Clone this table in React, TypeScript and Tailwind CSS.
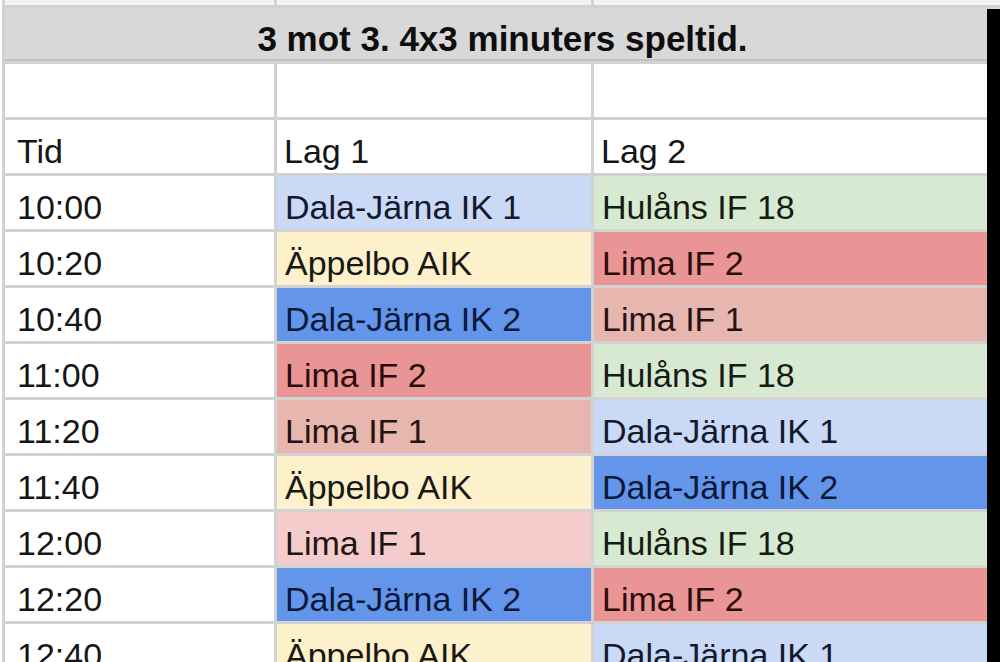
import React from "react";

type Cell = { t: string; bg: string; fg?: string };

const C = {
  lblue: "bg-[#c9d9f6]",
  blue: "bg-[#6396ea]",
  yellow: "bg-[#fdf1cb]",
  red: "bg-[#ea9595]",
  berry: "bg-[#e7b6ae]",
  pink: "bg-[#f4cccc]",
  green: "bg-[#d8e9d2]",
};

const D1: Cell = { t: "Dala-Järna IK 1", bg: C.lblue, fg: "text-[#141a2c]" };
const D2: Cell = { t: "Dala-Järna IK 2", bg: C.blue, fg: "text-[#0c1838]" };
const AP: Cell = { t: "Äppelbo AIK", bg: C.yellow, fg: "text-[#1a1814]" };
const L2: Cell = { t: "Lima IF 2", bg: C.red, fg: "text-[#2a0c0c]" };
const L1b: Cell = { t: "Lima IF 1", bg: C.berry, fg: "text-[#241312]" };
const L1p: Cell = { t: "Lima IF 1", bg: C.pink, fg: "text-[#221414]" };
const HU: Cell = { t: "Hulåns IF 18", bg: C.green, fg: "text-[#141c14]" };

const rows: { time: string; a: Cell; b: Cell }[] = [
  { time: "10:00", a: D1, b: HU },
  { time: "10:20", a: AP, b: L2 },
  { time: "10:40", a: D2, b: L1b },
  { time: "11:00", a: L2, b: HU },
  { time: "11:20", a: L1b, b: D1 },
  { time: "11:40", a: AP, b: D2 },
  { time: "12:00", a: L1p, b: HU },
  { time: "12:20", a: D2, b: L2 },
  { time: "12:40", a: AP, b: D1 },
];

function Td({ children, className = "" }: { children?: React.ReactNode; className?: string }) {
  return (
    <div className={`flex items-end pb-[2px] leading-[39px] whitespace-nowrap overflow-hidden ${className}`}>
      {children}
    </div>
  );
}

export default function App() {
  return (
    <div
      className="relative w-[1000px] h-[662px] overflow-hidden bg-white text-[34px] text-[#161616]"
      style={{ fontFamily: '"Liberation Sans", Arial, sans-serif' }}
    >
      <div className="pl-[2px] bg-white">
        <div className="grid grid-cols-[269px_314px_1fr] grid-rows-[5px_53px_53px_53px_repeat(9,53px)] gap-[3px] pl-[3px] bg-[#d2d2d2]">
          <div className="bg-[#f3f3f3]" />
          <div className="bg-[#f3f3f3]" />
          <div className="bg-[#f3f3f3]" />

          <div className="col-span-3 flex items-end justify-center pb-[1px] leading-[39px] bg-[#d8d8d8] font-bold text-[35px] text-[#0e0e0e] border-b-[2px] border-[#c2c2c2]">
            3 mot 3. 4x3 minuters speltid.
          </div>

          <div className="bg-white" />
          <div className="bg-white" />
          <div className="bg-white" />

          <Td className="bg-white pl-[12px]">Tid</Td>
          <Td className="bg-white pl-[7px]">Lag 1</Td>
          <Td className="bg-white pl-[7px]">Lag 2</Td>

          {rows.map((r) => (
            <React.Fragment key={r.time}>
              <Td className="bg-white pl-[12px]">{r.time}</Td>
              <Td className={`pl-[8px] ${r.a.bg} ${r.a.fg ?? ""}`}>{r.a.t}</Td>
              <Td className={`pl-[8px] ${r.b.bg} ${r.b.fg ?? ""}`}>{r.b.t}</Td>
            </React.Fragment>
          ))}
        </div>
      </div>
      <div className="absolute right-0 top-[9px] bottom-0 w-[13px] bg-black" />
    </div>
  );
}
